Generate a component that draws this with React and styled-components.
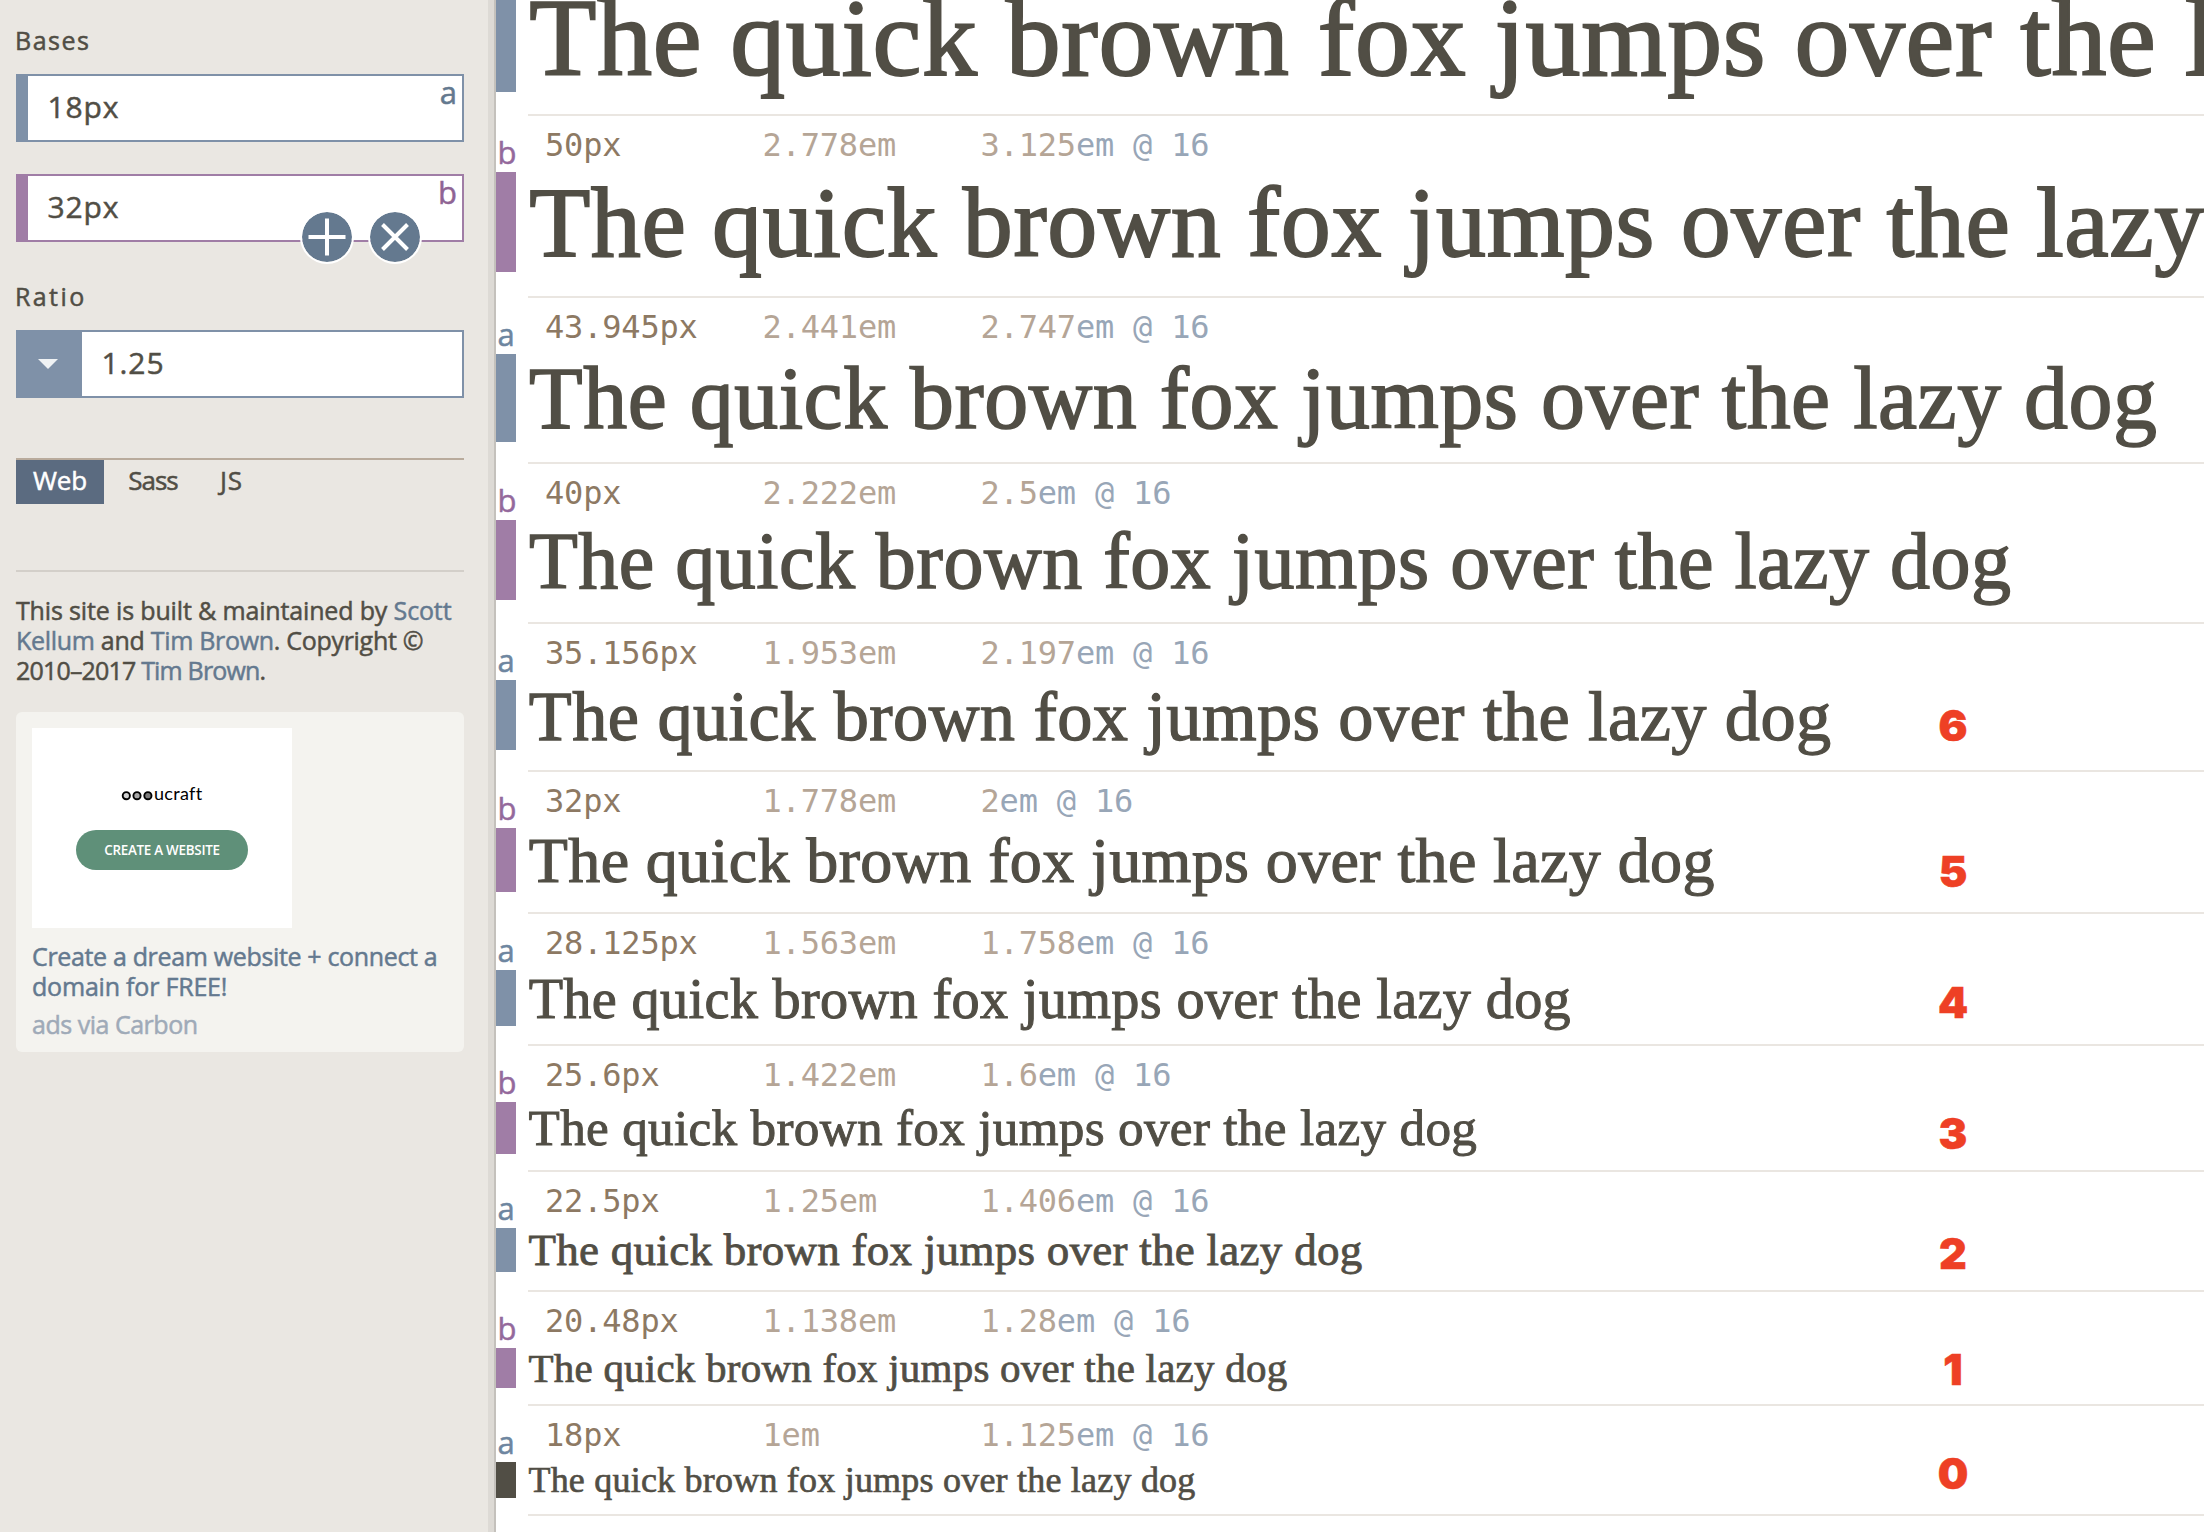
import React from 'react';
import styled, { createGlobalStyle } from 'styled-components';

const color = {
  ink: '#514e45',
  blue: '#7f91a8',
  blueText: '#64798f',
  purple: '#a07da6',
  purpleText: '#8f6494',
  rule: '#eae6e1',
  panel: '#eae7e2',
};

const sans = '"Open Sans", "Noto Sans", sans-serif';
const mono = '"DejaVu Sans Mono", monospace';
const serif = '"Liberation Serif", serif';

const GlobalStyle = createGlobalStyle`
  *, *::before, *::after { box-sizing: border-box; }
  html, body { margin: 0; padding: 0; background: #fff; }
  body { font-family: ${sans}; color: ${color.ink}; overflow: hidden; -webkit-text-stroke: 0.5px currentcolor; }
  p, h2 { margin: 0; font-weight: 400; }
`;

const Page = styled.div`
  display: grid;
  grid-template-columns: 496px minmax(0, 1fr);
  height: 1532px;
  overflow: hidden;
`;

const Sidebar = styled.aside`
  display: flex;
  flex-direction: column;
  padding: 0 30px 0 16px;
  background: ${color.panel};
  border-right: 2px solid #c4c1bc;
  box-shadow: inset -6px 0 0 #dddad5;
`;

const Heading = styled.h2`
  flex: none;
  height: ${(p) => p.$height}px;
  margin-left: -1px;
  font-size: 25px;
  line-height: ${(p) => p.$line}px;
  letter-spacing: ${(p) => p.$track}px;
`;

const BaseList = styled.div`
  display: flex;
  flex-direction: column;
  gap: 32px;
`;

const tones = {
  a: { line: color.blue, text: color.blueText },
  b: { line: color.purple, text: color.purpleText },
};

const Field = styled.div`
  position: relative;
  display: flex;
  flex: none;
  height: 68px;
  background: #fff;
  border: 2px solid ${(p) => tones[p.$tone].line};
  border-left-width: ${(p) => p.$edge || 2}px;
`;

const Value = styled.span`
  padding-left: 19.5px;
  font-size: 30px;
  line-height: 61px;
  letter-spacing: 0.9px;
`;

const FieldTag = styled.span`
  position: absolute;
  top: 0;
  right: 5px;
  font-size: 31px;
  line-height: 33px;
  color: ${(p) => tones[p.$tone].text};
`;

const FieldActions = styled.div`
  position: absolute;
  top: 34px;
  left: 272px;
  display: flex;
  gap: 13.6px;
`;

const RoundButton = styled.button`
  display: flex;
  align-items: center;
  justify-content: center;
  width: 54px;
  height: 54px;
  padding: 0;
  border: 2px solid #fff;
  border-radius: 50%;
  background: ${color.blueText};
  background-clip: padding-box;
`;

const Dropdown = styled.div`
  display: flex;
  align-items: center;
  justify-content: center;
  width: 64px;
  padding-right: 4px;
  background: ${color.blue};
`;

const Tabs = styled.nav`
  display: flex;
  flex: none;
  margin-top: 60px;
  border-top: 2px solid #b9ab9c;
`;

const Tab = styled.span`
  width: ${(p) => p.$width}px;
  height: 44px;
  font-size: 26px;
  line-height: 41px;
  letter-spacing: ${(p) => p.$track || 0}px;
  text-align: center;
  color: ${(p) => (p.$active ? '#fff' : color.ink)};
  background: ${(p) => (p.$active ? '#5b6b80' : 'transparent')};
`;

const Credits = styled.div`
  flex: none;
  margin-top: 66px;
  padding-top: 23px;
  border-top: 2px solid #d3cfc9;
`;

const Line = styled.span`
  display: block;
  font-size: 25px;
  line-height: 30px;
  white-space: nowrap;
  letter-spacing: ${(p) => p.$track}px;
`;

const Link = styled.span`
  color: ${color.blueText};
`;

const Ad = styled.div`
  flex: none;
  margin-top: 27px;
  padding: 16px 16px 13px;
  border-radius: 6px;
  background: #f4f3ef;
`;

const AdImage = styled.div`
  display: flex;
  flex-direction: column;
  align-items: center;
  gap: 20px;
  width: 260px;
  height: 200px;
  padding-top: 52px;
  background: #fff;
  -webkit-text-stroke-width: 0;
`;

const AdButton = styled.span`
  width: 172px;
  height: 40px;
  border-radius: 20px;
  background: #5f9079;
  color: #fff;
  font-size: 13.4px;
  font-weight: 600;
  line-height: 40px;
  letter-spacing: -0.25px;
  text-align: center;
`;

const LogoText = styled.text`
  font-family: Lato, sans-serif;
  font-size: 18px;
  letter-spacing: 0.3px;
`;

const AdTitle = styled.p`
  margin-top: 13px;
  color: ${color.blueText};
`;

const AdSource = styled.p`
  margin-top: 8px;
  color: #9faab8;
`;

const Scale = styled.main`
  margin-top: -18px;
  background: #fff;
`;

const Step = styled.section`
  position: relative;
  display: grid;
  grid-template-columns: 20px minmax(0, 1fr);
  column-gap: 12px;
`;

const Gutter = styled.div`
  display: flex;
  flex-direction: column;
`;

const StepTag = styled.span`
  height: 56px;
  padding-left: 1.5px;
  font-size: 31px;
  line-height: 72px;
  color: ${(p) => (p.$tone === 'a' ? '#6e86a0' : '#94699c')};
`;

const Bar = styled.div`
  height: ${(p) => p.$height}px;
  background: ${(p) => (p.$root ? color.ink : tones[p.$tone].line)};
`;

const StepBody = styled.div`
  overflow: hidden;
  padding-bottom: ${(p) => p.$gap}px;
  border-bottom: 2px solid ${color.rule};
`;

const Sizes = styled.div`
  display: grid;
  grid-template-columns: 217.5px 218px auto;
  justify-content: start;
  height: 56px;
  padding-left: 17px;
  font-family: ${mono};
  font-size: 32px;
  line-height: 59px;
  letter-spacing: -0.19px;
  white-space: pre;
  color: #b5a596;
  -webkit-text-stroke-width: 0;
`;

const Pixels = styled.span`
  color: #8d7963;
`;

const Unit = styled.span`
  color: #98a6b7;
`;

const Sample = styled.p`
  height: ${(p) => p.$height}px;
  padding-left: 0.012em;
  font-family: ${serif};
  font-size: ${(p) => p.$size}px;
  line-height: ${(p) => (p.$height < 56 ? p.$height : p.$height + 2)}px;
  letter-spacing: 0.006em;
  white-space: nowrap;
  -webkit-text-stroke-width: 0.018em;
`;

const Marker = styled.span`
  position: absolute;
  top: ${(p) => p.$top}px;
  left: 1437px;
  width: 40px;
  font-family: Inter, sans-serif;
  font-size: 43px;
  font-weight: 900;
  line-height: 43px;
  text-align: center;
  color: #ee4025;
`;

const steps = [
  { tone: 'a', px: '54.932', bar: 110, gap: 22 },
  { tone: 'b', px: '50', em: '2.778', at: '3.125', bar: 100, gap: 24 },
  { tone: 'a', px: '43.945', em: '2.441', at: '2.747', bar: 88, gap: 20 },
  { tone: 'b', px: '40', em: '2.222', at: '2.5', bar: 80, gap: 22 },
  { tone: 'a', px: '35.156', em: '1.953', at: '2.197', bar: 70, gap: 20, mark: '6', markTop: 80 },
  { tone: 'b', px: '32', em: '1.778', at: '2', bar: 64, gap: 20, mark: '5', markTop: 78 },
  { tone: 'a', px: '28.125', em: '1.563', at: '1.758', bar: 56, gap: 18, mark: '4', markTop: 67 },
  { tone: 'b', px: '25.6', em: '1.422', at: '1.6', bar: 52, gap: 16, mark: '3', markTop: 66 },
  { tone: 'a', px: '22.5', em: '1.25', at: '1.406', bar: 44, gap: 18, mark: '2', markTop: 60 },
  { tone: 'b', px: '20.48', em: '1.138', at: '1.28', bar: 40, gap: 16, mark: '1', markTop: 56 },
  { tone: 'a', px: '18', em: '1', at: '1.125', bar: 36, gap: 16, mark: '0', markTop: 46, root: true },
];

function PlusIcon() {
  return (
    <svg width="50" height="50" viewBox="0 0 50 50" stroke="#fff" strokeWidth="4">
      <path d="M6.5 25h37M25 6.5v37" />
    </svg>
  );
}

function CrossIcon() {
  return (
    <svg width="50" height="50" viewBox="0 0 50 50" stroke="#fff" strokeWidth="4">
      <path d="M12.5 12.5l25 25M37.5 12.5l-25 25" />
    </svg>
  );
}

function UcraftLogo() {
  return (
    <svg width="84" height="30" viewBox="0 0 84 30">
      <g stroke="#000" strokeWidth="1.9">
        <circle cx="6.3" cy="15.7" r="3.6" fill="#d0d0d0" />
        <circle cx="17" cy="15.7" r="3.6" fill="#a8a8a8" />
        <circle cx="27.9" cy="15.7" r="3.6" fill="#7c7c7c" />
      </g>
      <LogoText x="34" y="19.8">ucraft</LogoText>
    </svg>
  );
}

export default function App() {
  return (
    <Page>
      <GlobalStyle />
      <Sidebar>
        <Heading $height={74} $line={81} $track={1.5}>Bases</Heading>
        <BaseList>
          <Field $tone="a" $edge={12}>
            <Value>18px</Value>
            <FieldTag $tone="a">a</FieldTag>
          </Field>
          <Field $tone="b" $edge={12}>
            <Value>32px</Value>
            <FieldTag $tone="b">b</FieldTag>
            <FieldActions>
              <RoundButton aria-label="Add base"><PlusIcon /></RoundButton>
              <RoundButton aria-label="Remove base"><CrossIcon /></RoundButton>
            </FieldActions>
          </Field>
        </BaseList>
        <Heading $height={88} $line={109} $track={2.4}>Ratio</Heading>
        <Field $tone="a">
          <Dropdown>
            <svg width="20" height="10" viewBox="0 0 20 10">
              <path d="M0 0h20L10 10z" fill="#eff2f4" />
            </svg>
          </Dropdown>
          <Value>1.25</Value>
        </Field>
        <Tabs>
          <Tab $width={88} $track={-0.2} $active>Web</Tab>
          <Tab $width={98} $track={-1}>Sass</Tab>
          <Tab $width={59} $track={1}>JS</Tab>
        </Tabs>
        <Credits>
          <Line $track={-0.15}>This site is built &amp; maintained by <Link>Scott</Link></Line>
          <Line $track={-0.3}><Link>Kellum</Link> and <Link>Tim Brown</Link>. Copyright ©</Line>
          <Line $track={-0.82}>2010–2017 <Link>Tim Brown</Link>.</Line>
        </Credits>
        <Ad>
          <AdImage>
            <UcraftLogo />
            <AdButton>CREATE A WEBSITE</AdButton>
          </AdImage>
          <AdTitle>
            <Line $track={-0.34}>Create a dream website + connect a</Line>
            <Line $track={-0.2}>domain for FREE!</Line>
          </AdTitle>
          <AdSource>
            <Line $track={-0.48}>ads via Carbon</Line>
          </AdSource>
        </Ad>
      </Sidebar>
      <Scale>
        {steps.map((s) => (
          <Step key={s.px}>
            <Gutter>
              {s.em && <StepTag $tone={s.tone}>{s.tone}</StepTag>}
              <Bar $tone={s.tone} $height={s.bar} $root={s.root} />
            </Gutter>
            <StepBody $gap={s.gap}>
              {s.em && (
                <Sizes>
                  <Pixels>{s.px}px</Pixels>
                  <span>{s.em}em</span>
                  <span>{s.at}<Unit>em @ 16</Unit></span>
                </Sizes>
              )}
              <Sample $size={s.px * 2} $height={s.bar}>The quick brown fox jumps over the lazy dog</Sample>
            </StepBody>
            {s.mark && <Marker $top={s.markTop}>{s.mark}</Marker>}
          </Step>
        ))}
      </Scale>
    </Page>
  );
}
